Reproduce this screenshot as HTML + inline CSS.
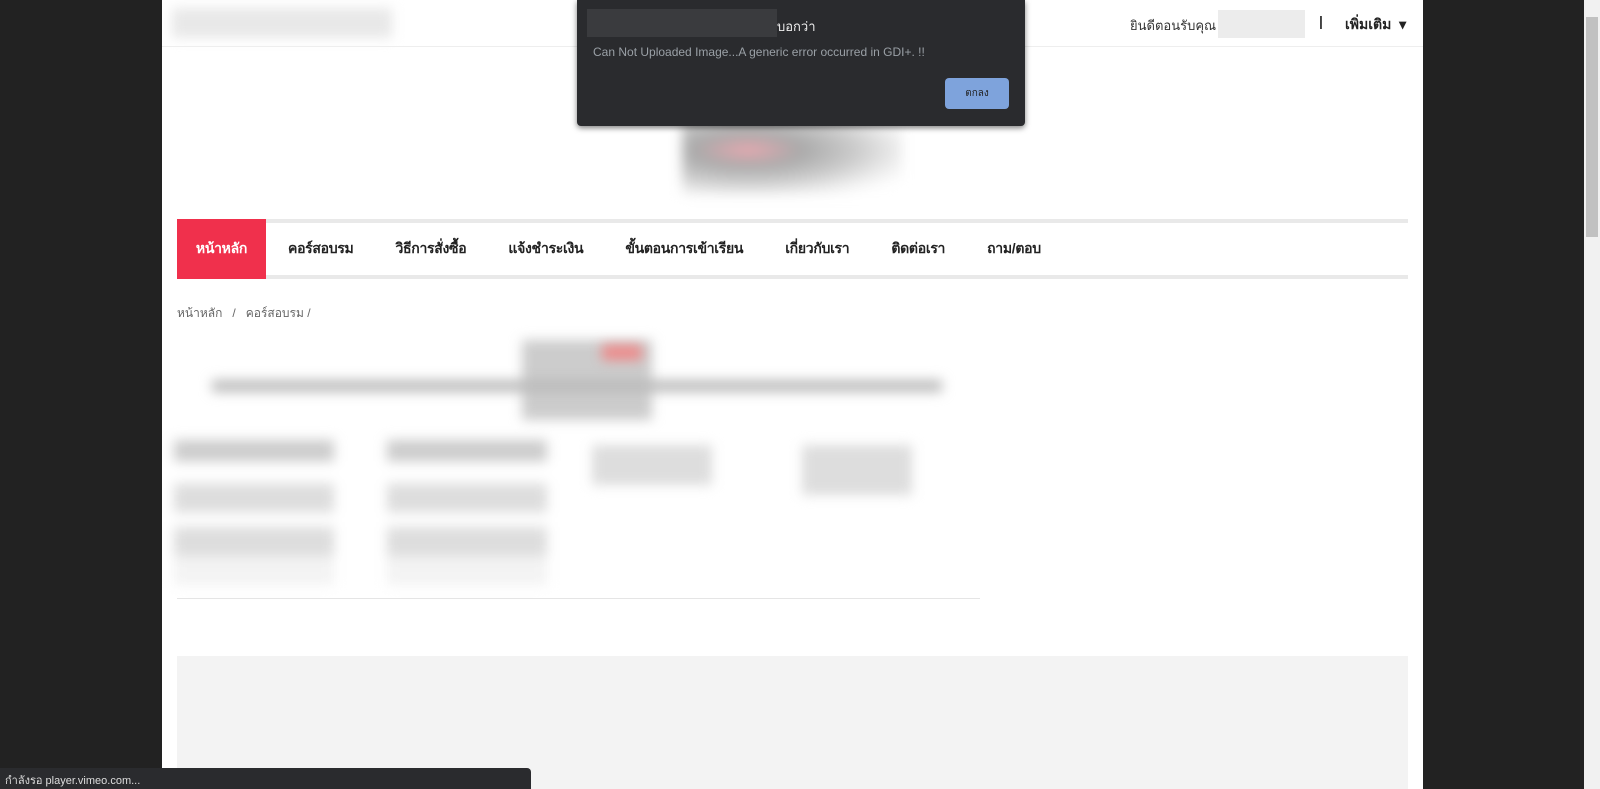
<!DOCTYPE html>
<html><head><meta charset="utf-8"><style>
*{margin:0;padding:0;box-sizing:border-box}
body{width:1600px;height:789px;overflow:hidden;background:#222;font-family:"Liberation Sans","Noto Sans CJK SC",sans-serif;position:relative}
.page{position:absolute;left:162px;top:0;width:1261px;height:789px;background:#fff;overflow:hidden}
.abs{position:absolute}
.blur{filter:blur(6px)}
.nav{position:absolute;left:15px;top:219px;width:1231px;height:60px;border-top:4px solid #e9e9e9;border-bottom:4px solid #e9e9e9;display:flex;align-items:center;font-size:14px;font-weight:bold;color:#222;letter-spacing:-0.3px}
.nav span{margin-right:42px}
</style></head><body>
<div class="page">
  <div class="abs blur" style="left:10px;top:8px;width:220px;height:30px;background:#e8e8e8"></div>
  <div class="abs" style="left:0;top:46px;width:1261px;height:1px;background:#eee"></div>
  <div class="abs" style="left:968px;top:15px;font-size:13px;color:#333">ยินดีตอนรับคุณ</div>
  <div class="abs" style="left:1056px;top:10px;width:87px;height:28px;background:#ececec"></div>
  <div class="abs" style="left:1157px;top:13px;font-size:14px;font-weight:bold;color:#333">|</div>
  <div class="abs" style="left:1183px;top:14px;font-size:14px;font-weight:bold;color:#222">เพิ่มเติม &nbsp;▾</div>
  <div class="abs blur" style="left:520px;top:120px;width:220px;height:75px;background:radial-gradient(ellipse at 30% 40%,#e8a8b0 0,#aaa 25%,#ccc 50%,#eee 70%,#fff 85%)"></div>
  <div class="nav">
    <div style="width:89px;height:60px;background:#f0304c;color:#fff;display:flex;align-items:center;justify-content:center;margin-right:22px">หน้าหลัก</div>
    <span>คอร์สอบรม</span><span>วิธีการสั่งซื้อ</span><span>แจ้งชำระเงิน</span><span>ขั้นตอนการเข้าเรียน</span><span>เกี่ยวกับเรา</span><span>ติดต่อเรา</span><span>ถาม/ตอบ</span>
  </div>
  <div class="abs" style="left:15px;top:304px;font-size:12px;color:#666">หน้าหลัก &nbsp; / &nbsp; คอร์สอบรม /</div>
  <div class="abs blur" style="left:360px;top:340px;width:130px;height:80px;background:#ccc"></div>
  <div class="abs blur" style="left:440px;top:345px;width:40px;height:15px;background:#e88"></div>
  <div class="abs blur" style="left:50px;top:380px;width:730px;height:12px;background:#bbb"></div>
  <div class="abs blur" style="left:12px;top:440px;width:160px;height:145px;background:linear-gradient(#ccc 0 15%,#fff 15% 30%,#ddd 30% 50%,#fff 50% 60%,#ddd 60% 80%,#f3f3f3 80%)"></div>
  <div class="abs blur" style="left:225px;top:440px;width:160px;height:145px;background:linear-gradient(#ccc 0 15%,#fff 15% 30%,#ddd 30% 50%,#fff 50% 60%,#ddd 60% 80%,#f3f3f3 80%)"></div>
  <div class="abs blur" style="left:430px;top:445px;width:120px;height:40px;background:#ddd"></div>
  <div class="abs blur" style="left:640px;top:445px;width:110px;height:50px;background:#ddd"></div>
  <div class="abs" style="left:15px;top:598px;width:803px;height:1px;background:#e5e5e5"></div>
  <div class="abs" style="left:15px;top:656px;width:1231px;height:140px;background:#f3f3f3"></div>
</div>
<div class="abs" style="left:1584px;top:0;width:16px;height:789px;background:#f1f1f1"></div>
<div class="abs" style="left:1586px;top:17px;width:12px;height:220px;background:#c1c1c1"></div>
<div class="abs" style="left:577px;top:0;width:448px;height:126px;background:#2a2b2e;box-shadow:0 2px 6px rgba(0,0,0,.5);border-radius:0 0 4px 4px">
  <div class="abs" style="left:10px;top:9px;width:190px;height:28px;background:#3a3b3e"></div>
  <div class="abs" style="left:200px;top:16px;font-size:13px;color:#eee">บอกว่า</div>
  <div class="abs" style="left:16px;top:45px;font-size:12px;color:#9aa0a6">Can Not Uploaded Image...A generic error occurred in GDI+. !!</div>
  <div class="abs" style="left:368px;top:78px;width:64px;height:31px;background:#7ea3dc;border-radius:4px;font-size:10px;color:#222;display:flex;align-items:center;justify-content:center">ตกลง</div>
</div>
<div class="abs" style="left:0;top:768px;width:531px;height:21px;background:#2a2b2e;border-radius:0 4px 0 0;color:#ddd;font-size:11px;padding:3px 5px">กำลังรอ player.vimeo.com...</div>
</body></html>
